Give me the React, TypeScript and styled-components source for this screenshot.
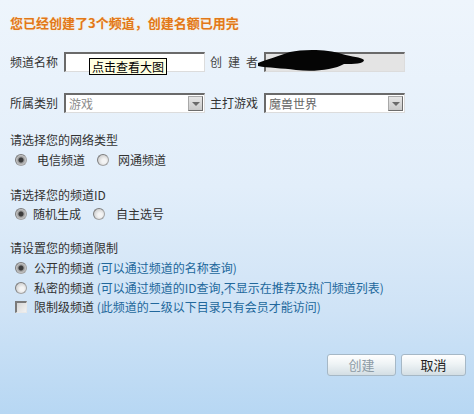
import { FunctionComponent } from "react";
import styled, { createGlobalStyle } from "styled-components";

const GlobalStyle = createGlobalStyle`
  html, body {
    margin: 0;
    padding: 0;
  }
  body {
    font-family: "Noto Sans CJK SC", "Liberation Sans", sans-serif;
    font-size: 12px;
    color: #333;
  }
`;

const App: FunctionComponent = () => {
  return (
    <>
      <GlobalStyle />
      <Page>
        <Title>您已经创建了3个频道，创建名额已用完</Title>

        <FieldRow $top={21}>
          <FieldLabel>频道名称</FieldLabel>
          <InputWrap>
            <TextInput />
            <Tooltip>点击查看大图</Tooltip>
          </InputWrap>
          <FieldLabel $spaced>创 建 者</FieldLabel>
          <InputWrap>
            <TextInput $readOnly />
            <Scribble viewBox="0 0 106 24" width="106" height="24">
              <path
                d="M0,14 C8,11 20,7 32,3 C45,0 70,0 84,5 C94,8 103,8 106,11 C106,15 96,15 86,15 C76,21 55,23 38,21 C24,19 10,19 0,17 Z"
                fill="#050505"
              />
            </Scribble>
          </InputWrap>
        </FieldRow>

        <FieldRow $top={21}>
          <FieldLabel>所属类别</FieldLabel>
          <Select>
            <SelectText $disabled>游戏</SelectText>
            <SelectArrow />
          </Select>
          <FieldLabel>主打游戏</FieldLabel>
          <Select>
            <SelectText>魔兽世界</SelectText>
            <SelectArrow />
          </Select>
        </FieldRow>

        <SectionLabel $top={19}>请选择您的网络类型</SectionLabel>
        <OptionRow $top={4}>
          <Radio $checked />
          <OptionText $gap={10}>电信频道</OptionText>
          <Radio $left={12} />
          <OptionText $gap={9}>网通频道</OptionText>
        </OptionRow>

        <SectionLabel $top={19}>请选择您的频道ID</SectionLabel>
        <OptionRow $top={3}>
          <Radio $checked />
          <OptionText $gap={6}>随机生成</OptionText>
          <Radio $left={12} />
          <OptionText $gap={11}>自主选号</OptionText>
        </OptionRow>

        <SectionLabel $top={18}>请设置您的频道限制</SectionLabel>
        <OptionRow $top={4}>
          <Radio $checked />
          <OptionText $gap={7}>
            公开的频道 <Hint>(可以通过频道的名称查询)</Hint>
          </OptionText>
        </OptionRow>
        <OptionRow $top={4}>
          <Radio />
          <OptionText $gap={7}>
            私密的频道 <Hint>(可以通过频道的ID查询,不显示在推荐及热门频道列表)</Hint>
          </OptionText>
        </OptionRow>
        <OptionRow $top={3}>
          <Checkbox />
          <OptionText $gap={7}>
            限制级频道 <Hint>(此频道的二级以下目录只有会员才能访问)</Hint>
          </OptionText>
        </OptionRow>

        <ButtonBar>
          <Button disabled $width={69}>创建</Button>
          <Button $width={65}>取消</Button>
        </ButtonBar>
      </Page>
    </>
  );
};

export default App;

const Page = styled.div`
  box-sizing: border-box;
  width: 474px;
  height: 414px;
  padding: 15px 8px 0 10px;
  background: linear-gradient(180deg, #eef5fc 0%, #e2eefa 45%, #cfe3f6 75%, #b7d7f3 100%);
  overflow: hidden;
`;

const Title = styled.div`
  line-height: 16px;
  font-size: 13px;
  font-weight: bold;
  color: #e27818;
  text-shadow: 0 0 2px #fde7c4;
`;

const FieldRow = styled.div<{ $top: number }>`
  display: flex;
  align-items: center;
  height: 20px;
  margin-top: ${({ $top }) => $top}px;
`;

const FieldLabel = styled.span<{ $spaced?: boolean }>`
  width: 48px;
  margin: 0 6px 0 0;
  line-height: 16px;
  white-space: nowrap;
  & + div {
    flex: none;
  }
  div + & {
    margin-left: 5px;
  }
  ${({ $spaced }) =>
    $spaced &&
    `
    text-align: justify;
    text-align-last: justify;
    color: #444;
  `}
`;

const InputWrap = styled.div`
  position: relative;
  width: 141px;
  height: 20px;
`;

const TextInput = styled.div<{ $readOnly?: boolean }>`
  box-sizing: border-box;
  width: 100%;
  height: 100%;
  background: ${({ $readOnly }) => ($readOnly ? "#e4e4e4" : "#fff")};
  border-top: 2px solid #6a6a6a;
  border-left: 2px solid #6a6a6a;
  border-right: 1px solid #dcdcdc;
  border-bottom: 1px solid #dcdcdc;
`;

const Tooltip = styled.div`
  position: absolute;
  left: 25px;
  top: 6px;
  box-sizing: border-box;
  height: 17px;
  padding: 0 2px;
  line-height: 15px;
  font-size: 12px;
  color: #000;
  background: #ffffe1;
  border: 1px solid #000;
  white-space: nowrap;
`;

const Scribble = styled.svg`
  position: absolute;
  left: -6px;
  top: -3px;
`;

const Select = styled.div`
  box-sizing: border-box;
  display: flex;
  align-items: center;
  width: 141px;
  height: 20px;
  background: #fff;
  border-top: 2px solid #6a6a6a;
  border-left: 2px solid #6a6a6a;
  border-right: 1px solid #dcdcdc;
  border-bottom: 1px solid #dcdcdc;
`;

const SelectText = styled.span<{ $disabled?: boolean }>`
  flex: 1;
  padding-left: 3px;
  font-size: 12px;
  color: ${({ $disabled }) => ($disabled ? "#8c8c8c" : "#666")};
`;

const SelectArrow = styled.span`
  position: relative;
  box-sizing: border-box;
  width: 15px;
  height: 15px;
  margin-right: 1px;
  background: linear-gradient(180deg, #e6e6e6, #c9c9c9);
  border: 1px solid #a8a8a8;
  border-right-color: #6d6d6d;
  border-bottom-color: #6d6d6d;
  &::after {
    content: "";
    position: absolute;
    left: 3px;
    top: 5px;
    border-left: 4px solid transparent;
    border-right: 4px solid transparent;
    border-top: 4px solid #6a6a6a;
  }
`;

const SectionLabel = styled.div<{ $top: number }>`
  margin-top: ${({ $top }) => $top}px;
  line-height: 16px;
`;

const OptionRow = styled.div<{ $top: number }>`
  display: flex;
  align-items: center;
  height: 16px;
  margin-top: ${({ $top }) => $top}px;
  padding-left: 5px;
`;

const Radio = styled.span<{ $checked?: boolean; $left?: number }>`
  box-sizing: border-box;
  flex: none;
  width: 12px;
  height: 12px;
  margin-left: ${({ $left }) => $left ?? 0}px;
  border-radius: 50%;
  border: 1px solid #a3a3a3;
  border-top-color: #7d7d7d;
  border-left-color: #7d7d7d;
  background: ${({ $checked }) =>
    $checked
      ? "radial-gradient(circle at 50% 50%, #3c3c3c 0 2px, #9a9a9a 3px, #e9e9e9 6px)"
      : "radial-gradient(circle at 60% 60%, #f4f4f4 0 2px, #d2d2d2 6px)"};
`;

const Checkbox = styled.span`
  box-sizing: border-box;
  flex: none;
  width: 12px;
  height: 12px;
  border-top: 2px solid #7a7a7a;
  border-left: 2px solid #7a7a7a;
  border-right: 1px solid #e8e8e8;
  border-bottom: 1px solid #e8e8e8;
  background: linear-gradient(135deg, #d6d6d6, #f2f2f2);
`;

const OptionText = styled.span<{ $gap: number }>`
  margin-left: ${({ $gap }) => $gap}px;
  line-height: 16px;
  white-space: nowrap;
`;

const Hint = styled.span`
  color: #22689c;
`;

const ButtonBar = styled.div`
  display: flex;
  justify-content: flex-end;
  gap: 5px;
  margin-top: 39px;
`;

const Button = styled.button<{ $width: number }>`
  box-sizing: border-box;
  width: ${({ $width }) => $width}px;
  height: 22px;
  padding: 0;
  font-family: "Noto Sans CJK SC", "Liberation Sans", sans-serif;
  font-size: 13px;
  line-height: 20px;
  color: #222;
  border: 1px solid #a6b8c6;
  border-radius: 3px;
  background: linear-gradient(180deg, #ffffff 0%, #eef3f5 45%, #d3dee4 100%);
  &:disabled {
    color: #8d9ba5;
  }
`;
